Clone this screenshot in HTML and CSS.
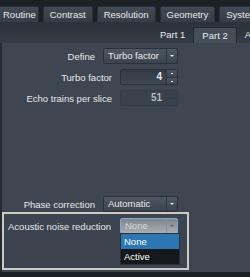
FILE: index.html
```html
<!DOCTYPE html>
<html>
  <head>
    <title>Turbo factor</title>
    <meta name="viewport" content="width=device-width, initial-scale=1.0" />
    <link rel="stylesheet" href="styles.css">
  </head>
  <body>
    <div class="tabs">
      <span class="tab first">Routine</span>
      <span class="tab">Contrast</span>
      <span class="tab">Resolution</span>
      <span class="tab">Geometry</span>
      <span class="tab">System</span>
    </div>
    <div class="subtabs">
      <span class="subtab">Part 1</span>
      <span class="subtab active">Part 2</span>
      <span class="subtab">Assist</span>
    </div>
    <div class="panel">
      <div class="row">
        <label>Define</label>
        <div class="select wide"><span class="value">Turbo factor</span><span class="arrow"></span></div>
      </div>
      <div class="row">
        <label>Turbo factor</label>
        <div class="spin"><span class="value">4</span><span class="buttons"><i class="up"></i><i class="down"></i></span></div>
      </div>
      <div class="row">
        <label>Echo trains per slice</label>
        <div class="spin disabled"><span class="value">51</span><span class="buttons"><i></i><i></i></span></div>
      </div>
      <div class="row phase">
        <label>Phase correction</label>
        <div class="select wide"><span class="value">Automatic</span><span class="arrow"></span></div>
      </div>
      <div class="highlight">
        <div class="row">
          <label>Acoustic noise reduction</label>
          <div class="select open">
            <span class="value">None</span><span class="arrow"></span>
            <ul class="list">
              <li class="selected">None</li>
              <li>Active</li>
            </ul>
          </div>
        </div>
      </div>
    </div>
  </body>
</html>
```

FILE: styles.css
```css
body {
  margin: 0;
  width: 250px;
  height: 277px;
  overflow: hidden;
  background-color: #1c2126;
  font-family: "Liberation Sans", Arial, sans-serif;
  font-size: 9.5px;
  color: #e8eaec;
}
.tabs {
  display: flex;
  gap: 4px;
  padding-top: 6px;
  white-space: nowrap;
  overflow: hidden;
}
.tab {
  flex-shrink: 0;
  height: 16px;
  line-height: 16px;
  padding: 0 6px;
  background: linear-gradient(#414a55, #353d46);
  border: 1px solid #2a3037;
  border-bottom: 0;
  border-radius: 2px 2px 0 0;
  box-sizing: border-box;
}
.tab.first {
  padding: 0 2px 0 3px;
  border-left: 0;
  border-radius: 0 2px 0 0;
}
.subtabs {
  display: flex;
  gap: 3px;
  height: 21px;
  padding-left: 155px;
  align-items: flex-end;
  background: linear-gradient(#2b3239, #343c45);
  white-space: nowrap;
  overflow: hidden;
}
.subtab {
  flex-shrink: 0;
  height: 16px;
  line-height: 16px;
  padding: 0 5px;
  box-sizing: border-box;
}
.subtab.active {
  background: #444e59;
  border: 1px solid #242a30;
  border-bottom: 0;
  border-radius: 2px 2px 0 0;
  padding: 0 8px;
}
.panel {
  height: 229px;
  box-sizing: border-box;
  background-color: #3d4651;
  border-left: 2px solid #252b31;
  padding-top: 5px;
  display: flex;
  flex-direction: column;
  gap: 5px;
}
.row {
  display: flex;
  justify-content: flex-end;
  align-items: center;
  gap: 8px;
  padding-right: 72px;
  height: 16px;
  white-space: nowrap;
}
.phase {
  margin-top: 85px;
}
.select {
  position: relative;
  display: flex;
  flex-shrink: 0;
  width: 58px;
  height: 16px;
  box-sizing: border-box;
  background: linear-gradient(#4d5763, #3b444e);
  border: 1px solid #2a3139;
  border-radius: 2px;
}
.select.wide {
  width: 75px;
}
.select .value {
  flex: 1;
  padding-left: 4px;
  line-height: 14px;
}
.select .arrow {
  width: 10px;
  border-left: 1px solid #2f363e;
  position: relative;
}
.select .arrow::after {
  content: "";
  position: absolute;
  left: 3px;
  top: 6px;
  border-left: 2px solid transparent;
  border-right: 2px solid transparent;
  border-top: 2px solid #e8eaec;
}
.spin {
  display: flex;
  flex-shrink: 0;
  width: 58px;
  height: 16px;
  box-sizing: border-box;
  background: linear-gradient(#333b44, #3e4752);
  border: 1px solid #2a3139;
  border-radius: 2px;
}
.spin .value {
  flex: 1;
  text-align: right;
  padding-right: 4px;
  line-height: 14px;
  font-weight: bold;
  font-size: 10px;
}
.spin .buttons {
  width: 10px;
  display: flex;
  flex-direction: column;
  border-left: 1px solid #2f363e;
}
.spin .buttons i {
  flex: 1;
  position: relative;
  background: linear-gradient(#4b5561, #3d4650);
}
.spin .buttons i + i {
  border-top: 1px solid #2f363e;
}
.spin .up::after,
.spin .down::after {
  content: "";
  position: absolute;
  left: 4px;
  top: 3px;
  width: 2px;
  height: 1px;
  background: #e8eaec;
}
.spin.disabled {
  background: #3a434d;
  border-color: #353d46;
}
.spin.disabled .value {
  color: #b4b9be;
}
.spin.disabled .buttons,
.spin.disabled .buttons i {
  background: #3a434d;
  border-color: #353d46;
}
.highlight {
  margin-top: -5px;
  width: 187px;
  height: 58px;
  box-sizing: border-box;
  border: 2px solid #cbcbc3;
  padding-top: 4px;
  background-color: #3b444f;
}
.highlight .row {
  padding-right: 9px;
  gap: 9px;
}
.select.open {
  background: linear-gradient(#7e858d, #a9aeb3);
  border-color: #7ea9cc;
  color: #d2d5d8;
}
.select.open .arrow {
  border-left-color: #8c939a;
}
.select.open .arrow::after {
  border-top-color: #5d646b;
}
.list {
  position: absolute;
  left: -1px;
  top: 14px;
  width: 58px;
  margin: 0;
  padding: 0;
  list-style: none;
  border: 1px solid #2a3037;
  background: #16191c;
  color: #ffffff;
}
.list li {
  height: 15px;
  line-height: 15px;
  padding-left: 3px;
}
.list li.selected {
  background: #2b77b3;
}
```
